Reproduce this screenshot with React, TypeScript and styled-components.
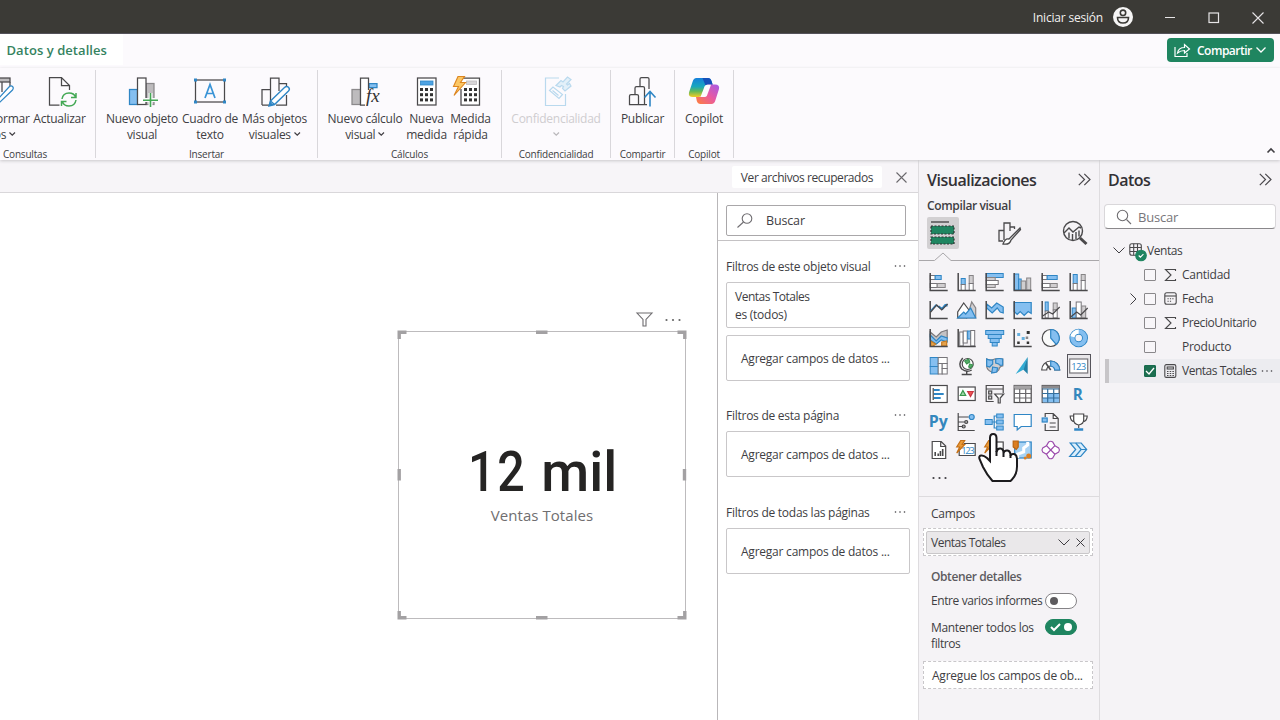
import React from "react";
import styled, { createGlobalStyle } from "styled-components";

const ink = "#403e43";
const dark = "#4a494b";
const blue = "#2f86c5";
const sky = "#85bff0";
const grey = "#bdbbbd";

const Global = createGlobalStyle`
  * { box-sizing: border-box; }
  body { margin: 0; overflow: hidden; font-family: "Open Sans", "Noto Sans", sans-serif; font-size: 12px; color: ${ink}; }
  svg { display: block; flex: none; overflow: visible; }
`;

const Txt = styled.span<{ $s?: number; $ls?: number; $w?: number; $c?: string }>`
  font-size: ${(p) => p.$s ?? 12}px;
  letter-spacing: ${(p) => p.$ls ?? -0.26}px;
  font-weight: ${(p) => p.$w ?? 400};
  color: ${(p) => p.$c ?? "inherit"};
  white-space: nowrap;
`;

const Window = styled.div`
  width: 1280px; height: 720px; display: flex; flex-direction: column; overflow: hidden; background: #fff;
`;
const TitleBar = styled.header`
  height: 34px; flex: none; background: #3b3a36; color: #f2f0f0; display: flex; align-items: center;
  justify-content: flex-end; padding: 1px 16px 0 0; border-bottom: 1px solid #54525a;
`;
const Avatar = styled.svg`margin-left: 10px;`;
const Controls = styled.div`
  display: flex; gap: 32px; margin-left: 31px; padding-top: 2px;
`;
const TabRow = styled.div`
  height: 34px; flex: none; background: #fcfafd; display: flex; justify-content: space-between; align-items: flex-start;
`;
const ActiveTab = styled.div`
  width: 123px; height: 31px; background: #fff; padding: 7px 0 0 6.5px; line-height: 18px;
`;
const ShareButton = styled.button`
  margin: 4px 6px 0 0; width: 107px; height: 24px; border: 0; border-radius: 4px; background: #1f8560; color: #fff;
  display: flex; align-items: center; padding: 0 7px; font-family: inherit;
  & > span { margin: 1px 4px 0 6px; }
`;
const Ribbon = styled.div`
  height: 92px; flex: none; display: flex; background: #fcfafd; padding-top: 2px; position: relative; z-index: 1;
  box-shadow: 0 1px 3px #c9c7cb;
`;
const Group = styled.section<{ $w: number; $ml?: number }>`
  width: ${(p) => p.$w}px; margin-left: ${(p) => p.$ml ?? 0}px; flex: none; height: 88px;
  border-right: 1px solid #d9d7db; display: flex; flex-direction: column;
`;
const Buttons = styled.div<{ $pl?: number }>`display: flex; height: 76px; flex: none; padding-left: ${(p) => p.$pl ?? 0}px;`;
const Tool = styled.div<{ $w: number; $off?: boolean }>`
  width: ${(p) => p.$w}px; flex: none; display: flex; flex-direction: column; align-items: center; line-height: 16px;
  padding-top: 5px; color: ${(p) => (p.$off ? "#cfcdd0" : ink)};
  & > svg { margin-bottom: 3.5px; }
`;
const Line = styled.div`display: flex; align-items: center; justify-content: center; gap: 3px; height: 16px;`;
const Caption = styled.div`
  display: flex; justify-content: center; line-height: 14px; padding-top: 1px;
`;
const Collapse = styled.div`margin-left: auto; align-self: flex-end; padding: 0 5px 7px 0;`;

const Body = styled.div`flex: 1; display: flex; min-height: 0;`;
const Left = styled.div`width: 918px; display: flex; flex-direction: column;`;
const Notice = styled.div`
  height: 33px; flex: none; background: #f7f5f8; border-bottom: 1px solid #d9d7da; display: flex; justify-content: flex-end; align-items: center;
  padding: 2px 11px 0 0;
`;
const NoticeAction = styled.div`
  width: 150px; height: 22px; background: #fff; display: flex; align-items: center; justify-content: center; margin-right: 14px;
  border-radius: 2px;
`;
const Work = styled.div`flex: 1; display: flex; min-height: 0;`;
const Canvas = styled.main`flex: 1; position: relative; background: #fff;`;
const Visual = styled.div`
  position: absolute; left: 398px; top: 138px; width: 288px; height: 288px; border: 1px solid #bdbbbd;
  display: flex; flex-direction: column; align-items: center; padding-top: 107px;
`;
const VisualTools = styled.div`
  position: absolute; right: 4px; top: -20px; display: flex; gap: 12px; align-items: center;
`;
const Handles = styled.svg`position: absolute; left: -2px; top: -2px;`;
const BigNumber = styled.div`
  font-family: Roboto, "Open Sans", sans-serif; font-size: 55px; font-weight: 500; line-height: 66px; height: 66px; color: #252423;
  white-space: nowrap; display: flex; gap: 15px; padding-right: 7px;
`;
const Digits = styled.span`transform: scaleX(.88); transform-origin: 100% 50%; letter-spacing: 2px;`;

const Filters = styled.aside`
  width: 201px; flex: none; border-left: 1px solid #b9b7b9; background: #fff; display: flex; flex-direction: column;
`;
const FilterSearch = styled.div`height: 48px; padding: 12px 0 0 8px; border-bottom: 1px solid #c4c2c4;`;
const FilterInput = styled.div`
  width: 180px; height: 31px; border: 1px solid #a9a7a9; border-radius: 2px; display: flex; align-items: center; padding-left: 10px; gap: 13px;
`;
const FilterSection = styled.section<{ $mt: number }>`
  margin: ${(p) => p.$mt}px 8px 0; display: flex; flex-direction: column; gap: 7px;
`;
const FilterHead = styled.div`display: flex; justify-content: space-between; align-items: center; height: 20px; margin-bottom: -1px; padding-right: 4px;`;
const FilterCard = styled.div<{ $drop?: boolean }>`
  height: 46px; border: 1px solid #c9c7c9; border-radius: 2px; display: flex; flex-direction: column; justify-content: center;
  line-height: 18px; padding: ${(p) => (p.$drop ? "1px 0 0 14px" : "1px 0 0 8px")};
`;

const Pane = styled.aside<{ $w: number }>`
  width: ${(p) => p.$w}px; flex: none; background: #f5f3f6; border-left: 1px solid #dedcdf; display: flex; flex-direction: column;
`;
const PaneTitle = styled.div`
  height: 38px; padding: 1px 8px 0 8px; display: flex; align-items: center; justify-content: space-between; color: #333135;
`;
const SubTitle = styled.div`height: 17px; line-height: 16px; padding-left: 8px;`;
const ModeRow = styled.div`height: 46px; display: flex; padding: 2px 8px 0 8px; justify-content: space-between;`;
const Mode = styled.div<{ $on?: boolean }>`
  width: 32px; height: 32px; border-radius: 2px; background: ${(p) => (p.$on ? "#d2d0d2" : "transparent")};
  display: flex; align-items: center; justify-content: center;
`;
const ModeCaret = styled.svg`margin-top: -9px;`;
const VisualGrid = styled.div`
  height: 236px; flex: none; padding: 7px 0 0 6px; display: grid; grid-template-columns: repeat(6, 28px); grid-auto-rows: 28px;
  place-items: center; border-bottom: 1px solid #dddbde; position: relative; align-content: start;
`;
const Cell = styled.div<{ $on?: boolean }>`
  width: 24px; height: 24px; display: flex; align-items: center; justify-content: center;
  outline: ${(p) => (p.$on ? "1px solid #55535a" : "none")}; outline-offset: -1px;
  background: ${(p) => (p.$on ? "#e9e7ea" : "transparent")};
`;
const Cursor = styled.svg`position: absolute; left: 59px; top: 171px; z-index: 3;`;
const Well = styled.div<{ $mt: number; $pl?: number }>`
  margin: ${(p) => p.$mt}px 6px 0 4px; height: 28px; border: 1px dashed #c9c7ca; background: #fff;
  padding: 2px 2px 2px ${(p) => p.$pl ?? 2}px; display: flex; align-items: center;
`;
const Chip = styled.div`
  flex: 1; height: 23px; background: #eae8ea; border: 1px solid #c9c7c9; border-radius: 2px; display: flex; align-items: center;
  padding: 1px 4px 0; gap: 6px; & > span { margin-right: auto; }
`;
const Setting = styled.div<{ $h: number; $mt: number }>`
  height: ${(p) => p.$h}px; margin-top: ${(p) => p.$mt}px; padding: 0 22px 0 12px; display: flex; justify-content: space-between; line-height: 16px;
`;
const Stack = styled.div`display: flex; flex-direction: column; padding-top: 1px;`;
const Toggle = styled.div<{ $on?: boolean }>`
  width: 32px; height: 16px; border-radius: 8px; flex: none; display: flex; align-items: center;
  background: ${(p) => (p.$on ? "#1f8560" : "#fff")};
  border: 1px solid ${(p) => (p.$on ? "#1f8560" : "#858386")};
  justify-content: ${(p) => (p.$on ? "flex-end" : "flex-start")}; padding: 0 4px; gap: 3px;
`;
const Knob = styled.i<{ $c: string }>`width: 8px; height: 8px; border-radius: 50%; background: ${(p) => p.$c};`;

const DataSearch = styled.div`
  margin: 6px 4px 0 4px; height: 25px; background: #fff; border: 1px solid #d9d7da; border-bottom-color: #8a888b; border-radius: 4px;
  display: flex; align-items: center; padding-left: 11px; gap: 6px;
`;
const Tree = styled.div`padding-top: 9.5px;`;
const TreeRow = styled.div<{ $sel?: boolean }>`
  height: 24px; margin-left: 5px; display: flex; align-items: center; position: relative;
  background: ${(p) => (p.$sel ? "#ececf0" : "transparent")};
  border-left: 4px solid ${(p) => (p.$sel ? "#c7c5c8" : "transparent")};
`;
const Slot = styled.div<{ $w: number }>`width: ${(p) => p.$w}px; flex: none; display: flex; align-items: center;`;
const RowMenu = styled.div`margin-left: 4px;`;
const Check = styled.div<{ $on?: boolean }>`
  width: 12px; height: 12px; border-radius: 1px; border: 1px solid ${(p) => (p.$on ? "#176b4d" : "#8a888b")};
  background: ${(p) => (p.$on ? "#1c6e50" : "#f8f6f9")}; display: flex; align-items: center; justify-content: center;
`;

const Chevron = ({ w = 7, c = ink, sw = 1.3, up = false }: { w?: number; c?: string; sw?: number; up?: boolean }) => (
  <svg width={w} height={w / 2 + 1} viewBox={`0 0 ${w} ${w / 2 + 1}`} fill="none" stroke={c} strokeWidth={sw}>
    <path d={up ? `M.5 ${w / 2 + 0.5}L${w / 2} 1L${w - 0.5} ${w / 2 + 0.5}` : `M.5 .5L${w / 2} ${w / 2}L${w - 0.5} .5`} />
  </svg>
);
const Dots = ({ gap = 4.5, r = 0.8, c = ink }: { gap?: number; r?: number; c?: string }) => (
  <svg width={gap * 2 + 3} height="4" fill={c}>
    {[0, 1, 2].map((i) => <circle key={i} cx={1.5 + i * gap} cy="2" r={r} />)}
  </svg>
);
const Cross = ({ s = 10, c = ink, w = 1.1 }: { s?: number; c?: string; w?: number }) => (
  <svg width={s} height={s} stroke={c} strokeWidth={w}><path d={`M.5 .5L${s - 0.5} ${s - 0.5}M${s - 0.5} .5L.5 ${s - 0.5}`} /></svg>
);
const DoubleChevron = () => (
  <svg width="13" height="13" fill="none" stroke="#4a484c" strokeWidth="1.2"><path d="M.8 .8l5.7 5.7L.8 12.2M6.3 .8L12 6.5L6.3 12.2" /></svg>
);

const Big = ({ children }: { children: React.ReactNode }) => (
  <svg width="32" height="32" viewBox="0 0 32 32" fill="none" stroke={dark} strokeWidth="1.25">{children}</svg>
);
const keypad = (x: number, y: number) =>
  [0, 1, 2].flatMap((r) => [0, 1, 2].map((c) => <rect key={`${r}${c}`} x={x + c * 5} y={y + r * 5.2} width="3" height="3" fill="#333" stroke="none" />));

const TransformIcon = () => (
  <Big>
    <rect x="1" y="3" width="29" height="4" fill={grey} /><path d="M3 7v20h12M22 7v10M30 7v5" />
    <path d="M18 24L29 12q2-2 3.500-.5t0 3.500L20 27l-4 2z" fill="#fff" stroke={blue} />
  </Big>
);
const RefreshIcon = () => (
  <Big>
    <path d="M15.500 30H5.500V2.500h12l8 8V15M17.500 2.500v8h8" />
    <g stroke="#43a854" strokeWidth="1.5"><path d="M18 24q1-6 7-6 5 0 6.500 4M32 18v4.500h-5M32 25q-1 6-7 6-5 0-6.500-4M17.500 31v-4.500h5" /></g>
  </Big>
);
const NewVisualIcon = () => (
  <Big>
    <rect x="3.500" y="14.500" width="8" height="15" fill={sky} stroke={blue} />
    <rect x="20" y="8.500" width="8" height="21" fill={grey} stroke="#8b898b" />
    <rect x="11.500" y="3" width="8.500" height="26.500" fill="#fff" />
    <path d="M24.500 18v13M17 25h15" stroke="#fcfafd" strokeWidth="4" />
    <path d="M24.500 18v14M17 25.200h15" stroke="#43a854" strokeWidth="1.6" />
  </Big>
);
const TextBoxIcon = () => (
  <Big>
    <rect x="1.500" y="5" width="29" height="22" />
    {[[0, 3.500], [29, 3.500], [0, 25.500], [29, 25.500]].map(([x, y]) => <rect key={`${x}${y}`} x={x} y={y} width="3" height="3" fill={blue} stroke="none" />)}
    <path d="M11 23L16 9.500L21 23M12.700 18.500h6.600" stroke="#3a94d6" strokeWidth="1.7" />
  </Big>
);
const Pencil = () => <path d="M11.500 26L25.500 12.500q2-2 4-.3 1.800 1.800 0 3.800L15.500 29.500l-5.500 1.500zM11.500 26l4 3.500" fill="#fff" stroke={blue} strokeWidth="1.4" />;
const MoreVisualsIcon = () => (
  <Big><path d="M3 30V14.500h8.500M11.500 30V3h8.500v13M20 8.500h7.500V14M3 30h7M27.500 20v10H17" /><Pencil /><path d="M10 31l1-4.500 3.500 3.500z" fill={blue} stroke="none" /></Big>
);
const NewCalcIcon = () => (
  <Big>
    <rect x="3" y="14.500" width="8.500" height="15" fill={grey} stroke="#8b898b" />
    <path d="M20 8.500h8v4h-8z" fill={sky} stroke={blue} />
    <path d="M16 30h-4.500V3h8v12" fill="#fff" />
    <text x="17" y="27" fontFamily="Liberation Serif" fontStyle="italic" fontSize="19" fill="#333" stroke="none">fx</text>
  </Big>
);
const MeasureIcon = () => (
  <Big><rect x="6.500" y="3" width="18.500" height="27" fill="#fff" /><rect x="9.500" y="6" width="12.500" height="4" fill="#4ea3e3" stroke={blue} strokeWidth=".8" />{keypad(9, 13)}</Big>
);
const Bolt = () => <path d="M5.500 1.500L1 11.500h5L1.500 20.500 13 7.500H8L12 1.500z" fill="#fbc765" stroke="#dd8620" strokeWidth="1.1" />;
const QuickIcon = () => (
  <svg width="32" height="32" viewBox="2.500 0 32 32" fill="none" stroke={dark} strokeWidth="1.25">
    <path d="M9 3h18v27H8.500V14" fill="#fff" /><rect x="14" y="6" width="10" height="3.500" fill="#d8d6d8" stroke={grey} strokeWidth=".8" />{keypad(11.500, 13)}<Bolt />
  </svg>
);
const SensitivityIcon = () => (
  <Big>
    <g stroke="#b9d9ee" strokeWidth="1.2">
      <path d="M19 3H5.500v27.500h20V19" />
      <path d="M9.500 15.500l3.500-3.500 9.500 7.500-3.500 4zM12.500 15.500l6 5" />
      <path d="M16 10.500l5-5 2 1.500L27.500 2l3.500 2.500-4.500 4.500 1 1 2-1.500 1.500 2.500-6 5-2.500-2.500 1-2-2-1-1.500 1.500z" fill="#e3f0f9" />
    </g>
  </Big>
);
const PublishIcon = () => (
  <Big>
    <path d="M2.500 29.500V21q0-1.500 1.500-1.500h6q1.500 0 1.500 1.500v8.500zM8 19.500V13q0-1.500 1.500-1.500H16q1.500 0 1.500 1.500v16.500h-6M13 11.500V4q0-1.500 1.500-1.500h6Q22 2.500 22 4v10M17.500 29.500H20" />
    <path d="M23 31.500V17M17.500 22.500L23 16.500l5.500 6" stroke={blue} strokeWidth="1.6" />
  </Big>
);
const CopilotIcon = () => (
  <svg width="32" height="32" viewBox="0 0 32 32">
    <defs>
      <linearGradient id="ca" x1="0" y1="0" x2="0" y2="1"><stop offset="0" stopColor="#167fdb" /><stop offset=".45" stopColor="#18a7bd" /><stop offset=".7" stopColor="#62b85a" /><stop offset="1" stopColor="#f4cc25" /></linearGradient>
      <linearGradient id="cb" x1="1" y1="0" x2="0" y2="1"><stop offset="0" stopColor="#a45be8" /><stop offset=".5" stopColor="#e95aa1" /><stop offset="1" stopColor="#ff8137" /></linearGradient>
    </defs>
    <path d="M8.500 3H20q2.500 0 3.500 3l1.200 3.700H20q-2.500 0-3.300 3L14 20q-.8 2-3.300 2H5Q0 22 1 17.500L4.500 7Q5.500 3 8.500 3z" fill="url(#ca)" />
    <path d="M14.500 3H20q2.500 0 3.500 3l1.200 3.700H20q-1.500 0-2.500.8z" fill="#1550b9" />
    <path d="M23.500 29H12.500q-2.800 0-3.700-3L8 22h3q2.700 0 3.500-2.500L17 12.500q.7-3 3.500-3H27q5 0 4 4.500L27.500 25q-1 4-4 4z" fill="url(#cb)" />
    <path d="M16.500 11.500q.7-1.700 2.500-1.800h4L19 20.500q-.7 1.500-2.500 1.500h-4z" fill="#fcfafd" />
  </svg>
);

type IconProps = { children: React.ReactNode };
const V = ({ children }: IconProps) => (
  <svg width="20" height="20" viewBox="0.300 0 20 20" fill="none" stroke={dark} strokeWidth="1.2">{children}</svg>
);
const axis = <path d="M1.500 1v17.500H19" stroke={dark} strokeWidth="1.500" />;
const R = ({ b, f, s }: { b: number[]; f?: string; s?: string }) => <rect x={b[0]} y={b[1]} width={b[2]} height={b[3]} fill={f ?? "none"} stroke={s ?? dark} strokeWidth="1" />;
const rb = (b: number[]) => <R b={b} f={sky} s={blue} />;
const rg = (b: number[]) => <R b={b} f="#d0ced0" s="#858385" />;
const rw = (b: number[]) => <R b={b} f="#fff" s="#77757a" />;

const icons: React.ReactNode[] = [
  <>{rw([1.5, 3.5, 5, 4])}{rb([6.500, 3.5, 6, 4])}{rw([1.5, 11.5, 7, 4])}{rg([8.5, 11.5, 8, 4])}{axis}</>,
  <>{rb([4.5, 6.500, 4, 6])}{rw([4.5, 12.500, 4, 6])}{rg([12.5, 3.5, 4, 8])}{rw([12.5, 11.5, 4, 7])}{axis}</>,
  <>{rb([1.5, 1.5, 17, 4])}{rg([1.5, 5.500, 9, 3])}{rw([1.5, 8.5, 12, 4])}{rg([1.5, 12.500, 9, 3])}{axis}</>,
  <>{rb([1.5, 2, 4.500, 16])}{rb([6, 7, 2.500, 11])}{rg([8.500, 9, 4.500, 9])}{rg([14, 6, 4, 12])}{axis}</>,
  <>{rw([1.5, 3.5, 5, 4])}{rb([6.500, 3.5, 10, 4])}{rw([1.5, 11.5, 8, 4])}{rg([9.500, 11.5, 7, 4])}{axis}</>,
  <>{rb([4.5, 2.500, 4, 9])}{rw([4.5, 11.5, 4, 7])}{rg([12.5, 2.500, 4, 6])}{rw([12.5, 8.5, 4, 10])}{axis}</>,
  <>{axis}<path d="M2 11l5-6 6 4 3-4 3 1M10 6l4 3 4-5" stroke={blue} strokeWidth="1.3" /><path d="M2 12l6-7 5 5 6-6" /></>,
  <><path d="M10 18L15 2l4 6v10z" fill="#d0ced0" stroke="#858385" /><path d="M1 18V12L7 3l6 8-3 7z" fill="#fff" /><path d="M1 18l6-6 2 2 5-6 5 10z" fill={sky} stroke={blue} /></>,
  <><path d="M2 4l5 4 5-5 6.500 4v6l-3-1-3-4-5 5-5.500-5z" fill={sky} stroke={blue} />{axis}</>,
  <><path d="M1.500 2.500h17v11l-3-2-4 4-4-4-3 3-3-3z" fill={sky} stroke={blue} />{axis}</>,
  <>{rb([4.500, 2, 3, 9])}{rw([4.5, 11, 3, 7])}{rg([12.500, 3, 4, 7])}{rw([12.5, 10, 4, 8])}<path d="M2 16l6-4 4 2 7-7" />{axis}</>,
  <>{rb([3.500, 8, 4, 10])}{rw([7.5, 2, 5, 16])}{rg([13, 6, 4, 12])}<path d="M2 17l6-5 4 3 7-7" />{axis}</>,
  <><path d="M1.500 4l6 5 5-5 6-2v8l-5-1-5 6-7-6z" fill="#c4c2c4" stroke="#7c7a7d" /><path d="M1.500 7l6 6 5-5 6 2v4l-6-2-5 4-6-4z" fill={sky} stroke={blue} /><path d="M2 13l5 3-3 2.500H2zM13 14l5-1v5h-5z" fill="#e4a14b" stroke="#c67a1f" />{axis}</>,
  <>{rw([3, 4, 3.500, 14])}{rw([6.500, 3, 4, 12])}{rb([11, 3, 3, 8])}{rw([14, 2.500, 4, 15.500])}{axis}</>,
  <>{rb([1, 2.500, 18, 4])}{rb([3.500, 6.500, 13, 4])}{rb([5.500, 10.500, 9, 4])}{rb([7.500, 14.500, 5, 3.500])}</>,
  <>{axis}<g stroke="none" fill="#333"><rect x="14" y="3" width="3" height="3" /><rect x="4.500" y="13.500" width="2.500" height="2.500" /><rect x="14" y="13.500" width="2.500" height="2.500" /><rect x="4.500" y="5" width="3" height="3" fill="#65b0df" /><rect x="9" y="9" width="3" height="3" fill="#65b0df" /><rect x="13" y="8.500" width="2.500" height="2.500" fill="#8b898b" /></g></>,
  <><circle cx="10" cy="10" r="8.500" fill="#fafafa" /><path d="M10 10V1.500a8.500 8.500 0 0 1 5.500 15z" fill={sky} stroke={blue} /></>,
  <><circle cx="10" cy="10" r="6.300" stroke={blue} strokeWidth="6" /><circle cx="10" cy="10" r="6.300" stroke={sky} strokeWidth="4.200" /><path d="M10 3.700a6.300 6.300 0 0 0-6.200 5" stroke="#fff" strokeWidth="4.200" /></>,
  <>{rb([1.5, 1.5, 8, 9])}{rb([1.5, 10.500, 8, 7.500])}{rw([9.500, 1.5, 9, 6])}{rw([9.500, 7.500, 4, 10.500])}{rw([13.500, 7.500, 5, 5])}{rw([13.500, 12.500, 5, 5.500])}</>,
  <><circle cx="11" cy="8" r="5.500" fill="#fff" stroke={dark} /><path d="M8 5l4-2 1 3-3 2zM13 8l3 1-2 3-2-1z" fill="#55ae68" stroke="#3b9450" /><path d="M6 2Q1 8 5 13q5 4 10 1M10 15.500V18M5 18.500h10" strokeWidth="1.4" /></>,
  <><path d="M2 3q4 2 8 0 4-1 8 0v7q-3 0-4 4-3 4-7 2-5-2-5-6z" fill="#d0ced0" stroke="#7c7a7d" /><path d="M2 3q3 1.500 6 1v4l-3 3-3-1zM11 3q4-1 7 0v6q-3 1-4-1l-3-1zM8 11l5 1-1 4-5 1z" fill={sky} stroke={blue} /></>,
  <><path d="M15 1v17l-5-5z" fill="#2481a8" stroke="none" /><path d="M15 1L3 18l8-4.500z" fill="#34acd4" stroke="none" /></>,
  <><path d="M1 14a9 9 0 0 1 18 0h-5a4 4 0 0 0-8 0z" fill="#fff" /><path d="M10 5a9 9 0 0 1 9 9h-5q0-3-4-4z" fill={sky} stroke={blue} /><path d="M10 14L5 7" strokeWidth="1.6" /></>,
  <><rect x="1" y="3" width="18" height="14" fill="#fff" stroke="#77757a" /><text x="2.500" y="13.500" fontSize="9.500" textLength="15" fill={blue} stroke="none" fontFamily="Open Sans">123</text></>,
  <><rect x="1.500" y="1.500" width="17" height="17" fill="#fff" /><path d="M5 6h6M5 10h10M5 14h7" stroke={blue} strokeWidth="2" /><path d="M4.500 4v12" /></>,
  <><rect x="1.500" y="3" width="17" height="13.500" fill="#fff" /><path d="M3.500 11.500L6.200 6.500 9 11.500z" fill="#9ed6a7" stroke="#38984c" /><path d="M11 7.500h5.500L13.800 12.500z" fill="#e55" stroke="#c93642" /></>,
  <><path d="M9 17.500H1.500v-16h17V9M1.500 5h17" /><rect x="4" y="7" width="3" height="3" fill="#ddd" /><rect x="4" y="12" width="3" height="3" fill="#ddd" /><path d="M10 10h9l-3.500 4v5h-2v-5z" fill="#fff" /></>,
  <><rect x="1.500" y="1.500" width="17" height="17" fill="#fff" /><path d="M1.500 3h17" strokeWidth="3" stroke="#a6a4a6" /><path d="M1.500 5h17M1.500 9.500h17M1.500 14h17M7 5v13.500M13 5v13.500" stroke="#68666a" /></>,
  <><rect x="1.500" y="1.500" width="17" height="17" fill="#fff" /><path d="M7 9.500h11.500v9H2V14h5z" fill={sky} stroke="none" /><path d="M1.500 3h17" strokeWidth="3" stroke="#8e8c8e" /><path d="M1.500 5h17M1.500 9.500h17M1.500 14h17M7 5v13.500M13 5v13.500" stroke="#356f9c" /></>,
  <text x="4" y="16" fontFamily="Open Sans" fontWeight="700" fontSize="16.500" textLength="10" lengthAdjust="spacingAndGlyphs" fill="#3487bd" stroke="none">R</text>,
  <text x="0" y="15" fontFamily="Open Sans" fontWeight="700" fontSize="16.500" textLength="19" lengthAdjust="spacingAndGlyphs" fill="#3487bd" stroke="none">Py</text>,
  <><path d="M1.500 1v17.500H18M2 5h10M2 10h6M2 14.500h4" /><circle cx="15" cy="5" r="2.500" stroke={blue} fill={sky} /><circle cx="9.500" cy="10" r="1.500" fill="#aaa" /><circle cx="7" cy="14.500" r="1.500" fill="#aaa" /></>,
  <>{rb([0.500, 7.500, 7, 5])}{rb([12, 2, 6.500, 4])}{rb([12, 8, 6.500, 4])}{rb([12, 14, 6.500, 4])}<path d="M7.500 10H12M12 4H9.500v12H12" stroke={blue} /></>,
  <path d="M1.500 2.500h17v12H8.500L4.500 18v-3.500h-3z" fill="#fff" stroke={blue} />,
  <><path d="M4.500 5V1.500h8l5 5v12h-13V12M12.500 1.500v5h5M9 11h6M9 15h6" /><rect x="1.500" y="6" width="5" height="4" fill={sky} stroke={blue} /></>,
  <><path d="M5 2h10v6q0 4-5 5-5-1-5-5zM5 4H1.500q0 5 4.500 6M15 4h3.500q0 5-4.500 6M10 13v3" fill="#fff" /><path d="M5.500 17.500h9" stroke={blue} strokeWidth="2.500" /></>,
  <><path d="M3.500 1.500h9l4.500 4.500v12.500H3.500zM12 1.500v5h5" fill="#fff" /><path d="M6.500 16v-4M9.500 16v-2.500M14 16V9M11.700 16v-5" strokeWidth="1.600" /></>,
  <><path d="M7 3.500h11.500v12H2.500V10" fill="#fff" /><text x="4.500" y="13.500" fontSize="9.500" textLength="13.500" fill={blue} stroke="none" fontFamily="Open Sans">123</text><path d="M4 .5L0 7h3l-3 6 8-8.500H5.500L8 .5z" fill="#e99a38" stroke="#c57017" /></>,
  <><rect x="6" y="2" width="12.500" height="15" fill="#fff" /><path d="M4 .5L0 7h3l-3 6 8-8.500H5.500L8 .5z" fill="#e99a38" stroke="#c57017" /></>,
  <><rect x="2" y="2" width="16.500" height="16" fill="#a8d3f4" stroke={blue} /><path d="M15 2v3l-4 3v4l-6 2v4" stroke="#fff" strokeWidth="3" /><path d="M.5 1h5v6l-2 2.500L.5 7z" fill="#dc7e20" stroke="#b96411" /><circle cx="16" cy="16" r="2.500" fill="#dc7e20" stroke="none" /><circle cx="12.500" cy="18" r="1.500" fill="#dc7e20" stroke="none" /></>,
  <g stroke="#9c4bac" fill="#fff"><path d="M8 2q2-1.500 4 0l2.200 3.700L10 10 5.800 5.700zM5.800 5.700L10 10l-4.200 4.200L2 12q-1.500-2 0-4zM14.200 5.700L18 8q1.500 2 0 4l-3.800 2.200L10 10zM10 10l4.200 4.200L12 18q-2 1.500-4 0l-2.200-3.800z" /></g>,
  <g stroke={blue} fill="#dceefb"><path d="M1.500 3h11l5.500 6.500-6 7h-11l6-7z" /><path d="M7 3l5.500 6.500-6 7M12.500 9.500H18" fill="none" /></g>,
];

const SearchIcon = ({ flip }: { flip?: boolean }) => (
  <svg width="16" height="16" fill="none" stroke="#6f6d71" strokeWidth="1.1">
    {flip ? <><circle cx="10" cy="5.500" r="4.800" /><path d="M6.500 9L.5 14.500" /></> : <><circle cx="6.500" cy="6.500" r="5.200" /><path d="M10.500 10.500L15 15" /></>}
  </svg>
);
const Sigma = () => <svg width="13" height="14" fill="none" stroke={dark} strokeWidth="1.1"><path d="M11.500 3V1.500H1.500L7 7l-5.500 5.500h10V11" /></svg>;
const CalendarIcon = () => (
  <svg width="13" height="13" fill="none" stroke={dark} strokeWidth="1.1"><rect x=".8" y=".8" width="11.400" height="11.400" rx="2" /><path d="M1 4h11" /><path d="M3.500 6.800h6.500M3.500 9.300h4" strokeDasharray="1.200 1.200" /></svg>
);
const CalcIcon = () => (
  <svg width="13" height="14" fill="none" stroke={dark} strokeWidth="1.1"><rect x=".8" y=".6" width="11" height="12.800" rx="1.500" /><rect x="3.200" y="3" width="6.200" height="2" /><path d="M3 7.500h7M3 9.500h7M3 11.500h7" strokeDasharray="1.500 1.200" /></svg>
);
const TableIcon = () => (
  <svg width="18" height="18" fill="none" stroke={dark} strokeWidth="1.100">
    <rect x=".8" y="1.800" width="11.500" height="11.500" rx="2" /><path d="M.8 5.500h11.500M.8 9.500h11.500M4.700 1.800v11.500M8.500 1.800v11.500" />
    <circle cx="12" cy="13.500" r="5.300" fill="#1f8560" stroke="#1f8560" /><path d="M9.700 13.500l1.700 1.700 3-3" stroke="#fff" />
  </svg>
);

type ToolDef = { w: number; icon: React.ReactNode; a: string; b?: string; arrow?: boolean; off?: boolean };
type GroupDef = { w: number; ml?: number; pl?: number; cap: string; tools: ToolDef[] };
const groups: GroupDef[] = [
  { w: 141, ml: -45, pl: 9, cap: "Consultas", tools: [
    { w: 64, icon: <TransformIcon />, a: "Transformar", b: "datos", arrow: true },
    { w: 63, icon: <RefreshIcon />, a: "Actualizar" },
  ] },
  { w: 222, pl: 8, cap: "Insertar", tools: [
    { w: 76, icon: <NewVisualIcon />, a: "Nuevo objeto", b: "visual" },
    { w: 60, icon: <TextBoxIcon />, a: "Cuadro de", b: "texto" },
    { w: 69, icon: <MoreVisualsIcon />, a: "Más objetos", b: "visuales", arrow: true },
  ] },
  { w: 184, pl: 7, cap: "Cálculos", tools: [
    { w: 80, icon: <NewCalcIcon />, a: "Nuevo cálculo", b: "visual", arrow: true },
    { w: 43, icon: <MeasureIcon />, a: "Nueva", b: "medida" },
    { w: 45, icon: <QuickIcon />, a: "Medida", b: "rápida" },
  ] },
  { w: 109, cap: "Confidencialidad", tools: [{ w: 108, icon: <SensitivityIcon />, a: "Confidencialidad", b: "", arrow: true, off: true }] },
  { w: 64, cap: "Compartir", tools: [{ w: 63, icon: <PublishIcon />, a: "Publicar" }] },
  { w: 59, cap: "Copilot", tools: [{ w: 58, icon: <CopilotIcon />, a: "Copilot" }] },
];

const fields = [
  { name: "Cantidad", icon: <Sigma /> },
  { name: "Fecha", icon: <CalendarIcon />, expand: true },
  { name: "PrecioUnitario", icon: <Sigma />, ls: -0.42 },
  { name: "Producto", icon: null },
  { name: "Ventas Totales", icon: <CalcIcon />, on: true, ls: -0.48 },
];

const DropCard = () => <FilterCard $drop><Txt $ls={-0.23}>Agregar campos de datos ...</Txt></FilterCard>;

export default function App() {
  return (
    <Window>
      <Global />
      <TitleBar>
        <Txt $ls={-0.2}>Iniciar sesión</Txt>
        <Avatar width="20" height="20" fill="none" stroke="#3b3a36" strokeWidth="1.600">
          <circle cx="10" cy="10" r="10" fill="#f6f5f5" stroke="none" /><circle cx="10" cy="5.800" r="2.700" /><path d="M4.500 10.500h11q0 5.500-5.500 5.500t-5.500-5.500z" />
        </Avatar>
        <Controls>
          <svg width="12" height="12" stroke="#e6e4e6"><path d="M1 5.500h10" /></svg>
          <svg width="12" height="12" fill="none" stroke="#e6e4e6" strokeWidth="1.200"><rect x="1" y="1" width="9.500" height="9.500" /></svg>
          <Cross s={12} c="#e6e4e6" />
        </Controls>
      </TitleBar>
      <TabRow>
        <ActiveTab><Txt $s={13} $w={600} $ls={0.06} $c="#35835f">Datos y detalles</Txt></ActiveTab>
        <ShareButton>
          <svg width="17" height="15" fill="none" stroke="#fff" strokeWidth="1.200"><path d="M1 4v9.500h12V10M3.500 10q1-5.500 7-5.500V1.500l5 4.500-5 4V7.500q-4 0-7 2.500z" /></svg>
          <Txt $w={600} $ls={-0.5}>Compartir</Txt>
          <Chevron w={10} c="#fff" />
        </ShareButton>
      </TabRow>
      <Ribbon>
        {groups.map((g) => (
          <Group key={g.cap} $w={g.w} $ml={g.ml}>
            <Buttons $pl={g.pl}>
              {g.tools.map((t) => (
                <Tool key={t.a} $w={t.w} $off={t.off}>
                  {t.icon}
                  <Line><Txt>{t.a}</Txt></Line>
                  {t.b !== undefined && <Line>{t.b && <Txt>{t.b}</Txt>}{t.arrow && <Chevron w={6.5} sw={1.2} c={t.off ? "#b9b7ba" : ink} />}</Line>}
                </Tool>
              ))}
            </Buttons>
            <Caption><Txt $s={10} $ls={-0.2}>{g.cap}</Txt></Caption>
          </Group>
        ))}
        <Collapse><Chevron w={8} up sw={1.6} /></Collapse>
      </Ribbon>
      <Body>
        <Left>
          <Notice>
            <NoticeAction><Txt $ls={-0.42}>Ver archivos recuperados</Txt></NoticeAction>
            <Cross s={11} c="#6a686c" />
          </Notice>
          <Work>
            <Canvas>
              <Visual>
                <VisualTools>
                  <svg width="17" height="15" fill="none" stroke="#6e6c6f" strokeWidth="1.1"><path d="M1 1h15l-6 6.500V14H7V7.500z" /></svg>
                  <Dots gap={6.500} r={1.1} c="#666" />
                </VisualTools>
                <Handles width="290" height="290" fill="none" stroke="#a3a1a3" strokeWidth="3.4">
                  <path d="M2.200 9V2.200H9.500M280.500 2.200h7.300V9M2.200 281v6.800H9.500M280.500 287.800h7.300V281M139 2.200h11.500M139 287.800h11.500M2.200 139v11.500M287.500 139v11.500" />
                </Handles>
                <BigNumber><Digits>12</Digits><span>mil</span></BigNumber>
                <Txt $s={15} $ls={0.05} $c="#706e70">Ventas Totales</Txt>
              </Visual>
            </Canvas>
            <Filters>
              <FilterSearch><FilterInput><SearchIcon flip /><Txt $s={12.5} $ls={-0.15}>Buscar</Txt></FilterInput></FilterSearch>
              <FilterSection $mt={15}>
                <FilterHead><Txt>Filtros de este objeto visual</Txt><Dots /></FilterHead>
                <FilterCard><Txt $ls={-0.48}>Ventas Totales</Txt><Txt>es (todos)</Txt></FilterCard>
                <DropCard />
              </FilterSection>
              <FilterSection $mt={24}><FilterHead><Txt>Filtros de esta página</Txt><Dots /></FilterHead><DropCard /></FilterSection>
              <FilterSection $mt={25}><FilterHead><Txt>Filtros de todas las páginas</Txt><Dots /></FilterHead><DropCard /></FilterSection>
            </Filters>
          </Work>
        </Left>
        <Pane $w={181}>
          <PaneTitle><Txt $s={16} $w={600} $ls={-0.5}>Visualizaciones</Txt><DoubleChevron /></PaneTitle>
          <SubTitle><Txt $w={600} $ls={-0.36}>Compilar visual</Txt></SubTitle>
          <ModeRow>
            <Mode $on>
              <svg width="26" height="26" fill="#1f8560" stroke="#333" strokeWidth="1.200"><path d="M1 2h18" /><rect x="1" y="6" width="23" height="8" strokeDasharray="2 1.500" /><rect x="1" y="17" width="23" height="7" strokeDasharray="2 1.500" /></svg>
            </Mode>
            <Mode>
              <svg width="24" height="26" fill="none" stroke={dark} strokeWidth="1.300"><path d="M6 21H2V10.500h5V20M7 11V3h6v8M13 7h4.500v2" /><path d="M23 8L12 19q-4-1-6 5 7 1 8-4L23.500 9.500z" fill="#fff" /></svg>
            </Mode>
            <Mode>
              <svg width="26" height="26" fill="none" stroke={dark} strokeWidth="1.400"><circle cx="11" cy="11" r="9.500" /><path d="M2 13l5-5 4 4 6-5 2 1M7 12.500v6M10.500 14v6M14 12v7M17 10.500v6" /><path d="M18 18l6.500 6" strokeWidth="3" /></svg>
            </Mode>
          </ModeRow>
          <ModeCaret width="180" height="9" fill="none" stroke="#a9a7aa"><path d="M0 8.500h15.500L24 1l8 7.500H180" /></ModeCaret>
          <VisualGrid>
            {icons.map((ic, i) => <Cell key={i} $on={i === 23}><V>{ic}</V></Cell>)}
            <Cell><Dots gap={6} r={1.1} /></Cell>
            <Cursor width="42" height="52" viewBox="0 0 42 52" fill="#fff" stroke="#1c1b1e" strokeWidth="2">
              <path d="M12 29V6q0-4 3.200-4T18.500 6v14q1-4 4-3.500t3 4.500q1-3 4-2.500t3 5q1-2 3.500-1.500t3 4.500v8q0 8-5 13l-1.500 1.500H14.500Q9 43 5 35L1.500 27q-1-3 1.500-3.500T9 26z" />
              <path d="M18.500 19v5M25.500 21v4M32.500 23v3" />
            </Cursor>
          </VisualGrid>
          <Setting $h={16} $mt={9}><Txt>Campos</Txt></Setting>
          <Well $mt={6}><Chip><Txt $ls={-0.48}>Ventas Totales</Txt><Chevron w={12} sw={1} /><Cross s={9} w={1} /></Chip></Well>
          <Setting $h={16} $mt={13}><Txt $ls={-0.4} $w={600} $c="#5d5b60">Obtener detalles</Txt></Setting>
          <Setting $h={16} $mt={8}><Txt $ls={-0.4}>Entre varios informes</Txt><Toggle><Knob $c="#5d5b5e" /></Toggle></Setting>
          <Setting $h={32} $mt={10}>
            <Stack><Txt $ls={-0.34}>Mantener todos los</Txt><Txt $ls={-0.4}>filtros</Txt></Stack>
            <Toggle $on><svg width="11" height="8" fill="none" stroke="#fff" strokeWidth="2"><path d="M1 4l3 3 6-6" /></svg><Knob $c="#fff" /></Toggle>
          </Setting>
          <Well $mt={10} $pl={8}><Txt $ls={-0.22}>Agregue los campos de ob...</Txt></Well>
        </Pane>
        <Pane $w={181}>
          <PaneTitle><Txt $s={16} $w={600} $ls={-0.5}>Datos</Txt><DoubleChevron /></PaneTitle>
          <DataSearch><SearchIcon /><Txt $s={13} $ls={-0.2} $c="#77757a">Buscar</Txt></DataSearch>
          <Tree>
            <TreeRow><Slot $w={4} /><Slot $w={16}><Chevron w={12} sw={1} /></Slot><TableIcon /><Txt $ls={-0.42}>Ventas</Txt></TreeRow>
            {fields.map((f) => (
              <TreeRow key={f.name} $sel={f.on}>
                <Slot $w={21} />
                <Slot $w={14}>{f.expand && <svg width="7" height="12" fill="none" stroke={ink}><path d="M.5 .5L6 6L.5 11.500" /></svg>}</Slot>
                <Slot $w={20}><Check $on={f.on}>{f.on && <svg width="10" height="8" fill="none" stroke="#fff" strokeWidth="1.300"><path d="M1 4l3 3 5-6" /></svg>}</Check></Slot>
                <Slot $w={18}>{f.icon}</Slot>
                <Txt $ls={f.ls}>{f.name}</Txt>
                {f.on && <RowMenu><Dots /></RowMenu>}
              </TreeRow>
            ))}
          </Tree>
        </Pane>
      </Body>
    </Window>
  );
}
